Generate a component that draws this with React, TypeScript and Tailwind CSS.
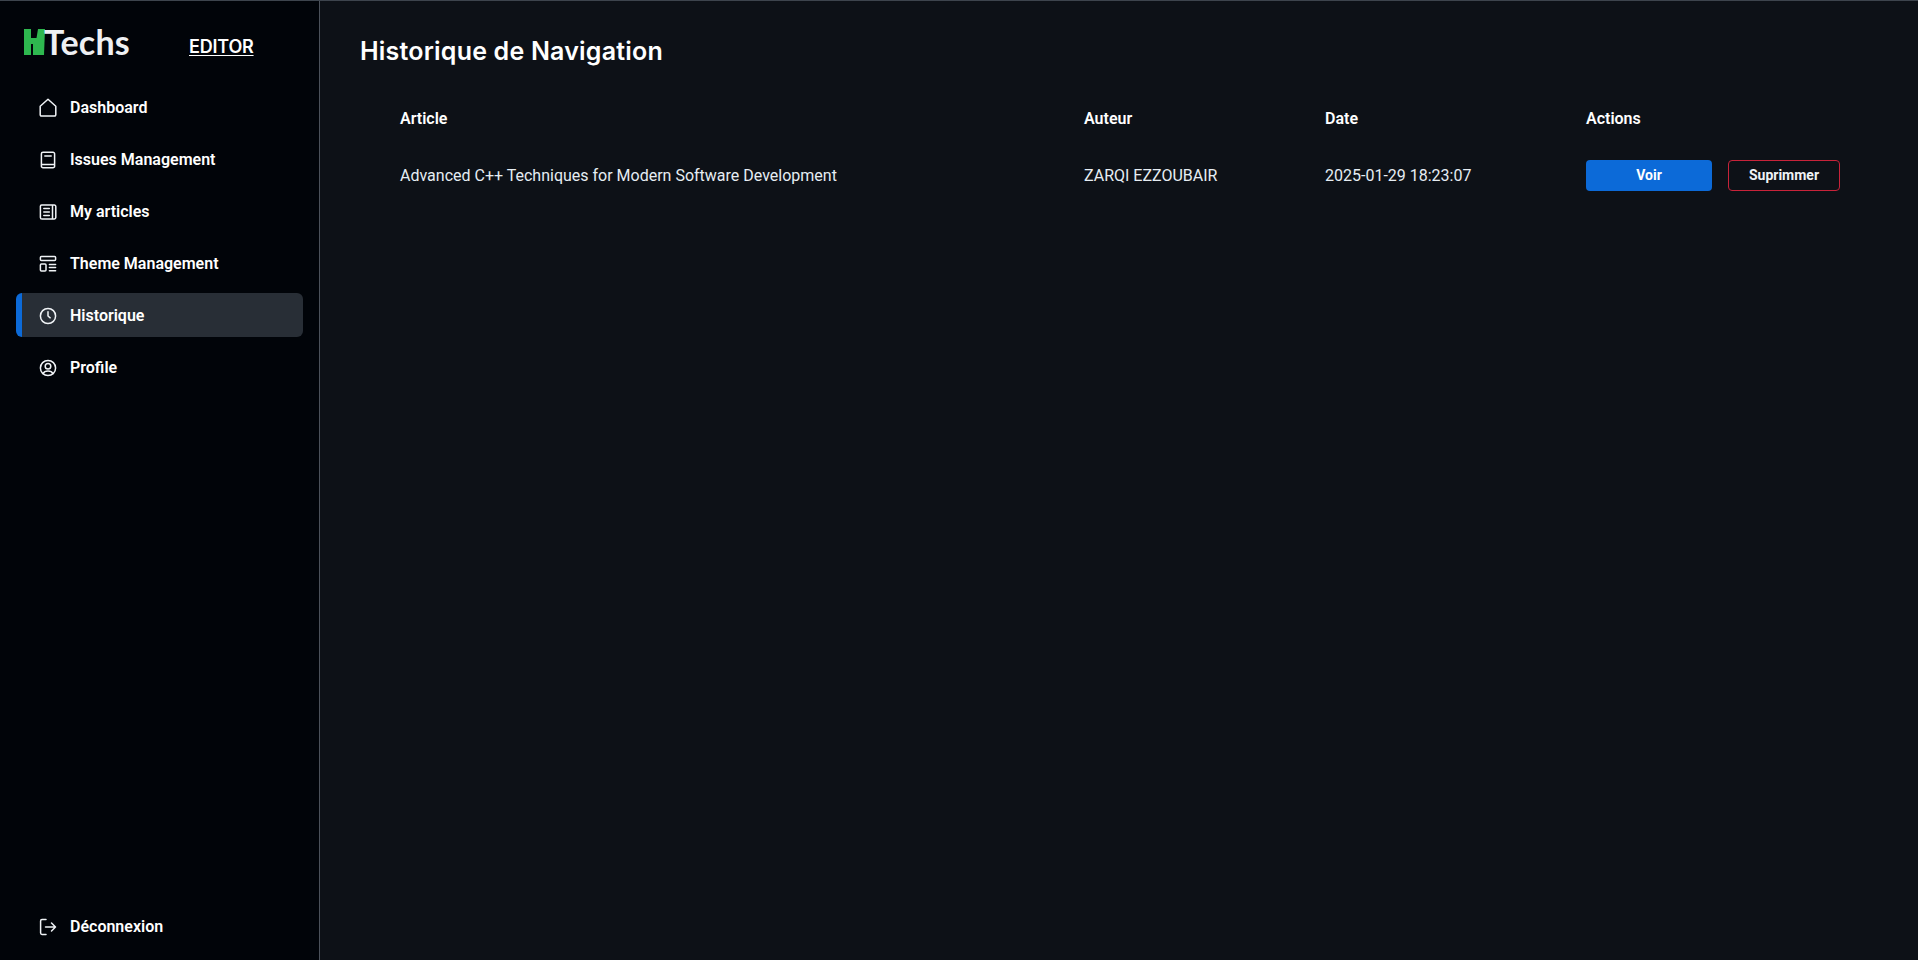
import type { ReactNode } from 'react';

const iconClass = 'h-5 w-5 shrink-0 text-[#f0f3f6]';

function Icon({ children }: { children: ReactNode }) {
  return (
    <svg viewBox="0 0 20 20" fill="none" stroke="currentColor" strokeWidth="1.5" strokeLinecap="round" strokeLinejoin="round" className={iconClass}>
      {children}
    </svg>
  );
}

const navItems: { label: string; icon: ReactNode; active?: boolean }[] = [
  {
    label: 'Dashboard',
    icon: <Icon><path d="M2.200 8.200 10 1.200l7.800 7v8.600a1.200 1.200 0 0 1-1.200 1.200H3.400a1.200 1.200 0 0 1-1.200-1.200z" /></Icon>,
  },
  {
    label: 'Issues Management',
    icon: <Icon><path d="M3.400 14.400V3.800a1.600 1.600 0 0 1 1.600-1.600h10a1.600 1.600 0 0 1 1.600 1.600v12.400a1.600 1.600 0 0 1-1.600 1.600H5a1.600 1.600 0 0 1-1.600-1.600v-1.800h13.200" /><path d="M6.800 6h6.400" /></Icon>,
  },
  {
    label: 'My articles',
    icon: <Icon><path d="M14.500 3v14H4a1.600 1.600 0 0 1-1.600-1.600V4.200A1.200 1.200 0 0 1 3.600 3h12.800a1.400 1.400 0 0 1 1.400 1.400v11.200a1.400 1.400 0 0 1-1.400 1.400h-1.900" /><path d="M5.800 6.500h5.500M5.800 10h5.500M5.800 13.500h5.500" /></Icon>,
  },
  {
    label: 'Theme Management',
    icon: <Icon><rect x="2.400" y="2.600" width="15.200" height="4" rx="1" /><rect x="2.400" y="10" width="5.600" height="7" rx="1" /><path d="M11.400 10.400h6.200M11.400 13.600h6.200M11.400 16.800h6.200" /></Icon>,
  },
  {
    label: 'Historique',
    active: true,
    icon: <Icon><circle cx="10" cy="10" r="7.600" /><path d="M10 5.800V10l2.200 1.800" /></Icon>,
  },
  {
    label: 'Profile',
    icon: <Icon><circle cx="10" cy="10" r="7.600" /><circle cx="10" cy="8.200" r="2.800" /><path d="M5 15.600c.9-1.800 2.800-2.600 5-2.600s4.100.8 5 2.600" /></Icon>,
  },
];

function NavRow({ label, icon, active }: { label: string; icon: ReactNode; active?: boolean }) {
  return (
    <a
      className={
        active
          ? 'flex h-11 items-center gap-[12px] rounded-md border-l-[6px] border-[#0c6ad8] bg-[#282e36] pt-[2px] pl-[16px] text-base font-semibold text-white'
          : 'flex h-11 items-center gap-[12px] rounded-md pt-[2px] pl-[22px] text-base font-semibold text-white'
      }
    >
      {icon}
      <span>{label}</span>
    </a>
  );
}

export default function App() {
  return (
    <div className="flex h-[960px] overflow-hidden border-t border-[#3d444d] bg-[#0d1117] font-['Roboto',sans-serif] text-white">
      <aside className="flex w-[320px] shrink-0 flex-col border-r border-[#4b515a] bg-[#010409]">
        <div className="flex h-[70px] items-start pl-6 pt-[25px]">
          <div className="flex h-[32px] w-[107px] items-center">
            <svg viewBox="0 0 22 26" className="h-[26px] w-[22px] shrink-0">
              <path d="M0 0h7v9h5.500l1.500-9h3l-1 26h-7v-11H7v11H0z" fill="#2eb84f" />
              <path d="M16 0h5l-1 26h-4z" fill="#2eb84f" />
            </svg>
            <span className="-ml-[2px] font-['Lato',sans-serif] text-[34px] leading-none font-bold tracking-[0.2px] text-[#eef0f3]">Techs</span>
          </div>
          <span className="ml-[58px] mt-[9px] font-['Inter',sans-serif] text-[18px] leading-[24px] font-semibold tracking-[-0.2px] text-white underline underline-offset-2">EDITOR</span>
        </div>
        <nav className="flex flex-col gap-2 px-4 pt-[14px]">
          {navItems.map((item) => (
            <NavRow key={item.label} {...item} />
          ))}
        </nav>
        <div className="mt-auto px-4 pb-[12px]">
          <NavRow
            label="Déconnexion"
            icon={<Icon><path d="M8 2.600H4a1.400 1.400 0 0 0-1.400 1.400v12A1.400 1.400 0 0 0 4 17.400h4" /><path d="M7.500 10h10M13.500 6l4 4-4 4" /></Icon>}
          />
        </div>
      </aside>
      <main className="flex-1 pl-10 pr-[38px] pt-[32px]">
        <h1 className="font-['Inter',sans-serif] text-[25px] leading-[36px] font-semibold tracking-[0.2px]">Historique de Navigation</h1>
        <table className="mt-[15px] w-full table-fixed text-left">
          <colgroup>
            <col className="w-[724px]" />
            <col className="w-[241px]" />
            <col className="w-[261px]" />
            <col />
          </colgroup>
          <thead>
            <tr className="h-[70px] text-base">
              <th className="pl-10 font-semibold">Article</th>
              <th className="font-semibold">Auteur</th>
              <th className="font-semibold">Date</th>
              <th className="font-semibold">Actions</th>
            </tr>
          </thead>
          <tbody>
            <tr className="h-[44px] text-base text-[#e6edf3]">
              <td className="pl-10">Advanced C++ Techniques for Modern Software Development</td>
              <td>ZARQI EZZOUBAIR</td>
              <td>2025-01-29 18:23:07</td>
              <td>
                <div className="mb-[2px] flex gap-4">
                  <button className="h-[31px] w-[126px] rounded-[4px] bg-[#0c6ad8] text-sm font-bold text-white">Voir</button>
                  <button className="h-[31px] w-[112px] rounded-[4px] border border-[#c8233a] text-sm font-bold text-[#f0f3f6]">Suprimmer</button>
                </div>
              </td>
            </tr>
          </tbody>
        </table>
      </main>
    </div>
  );
}
